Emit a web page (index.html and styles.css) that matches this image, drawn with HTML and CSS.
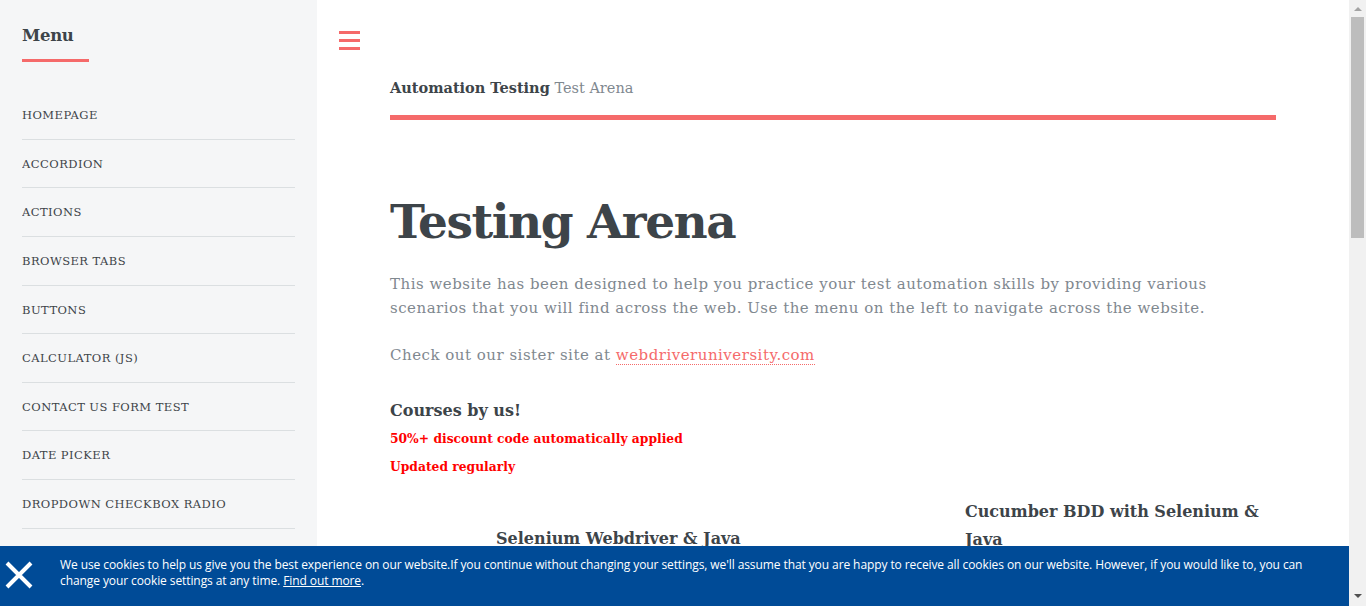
FILE: index.html
```html
<!DOCTYPE html>
<html lang="en">
<head>
<meta charset="utf-8">
<title>WebdriverUniversity.com (Test Arena)</title>
<link rel="stylesheet" href="styles.css">
</head>
<body>
<div class="wrapper">
  <aside class="sidebar">
    <header class="menu-head">
      <h2>Menu</h2>
    </header>
    <ul class="menu">
      <li><a href="#">Homepage</a></li>
      <li><a href="#">Accordion</a></li>
      <li><a href="#">Actions</a></li>
      <li><a href="#">Browser Tabs</a></li>
      <li><a href="#">Buttons</a></li>
      <li><a href="#">Calculator (JS)</a></li>
      <li><a href="#">Contact Us Form Test</a></li>
      <li><a href="#">Date Picker</a></li>
      <li><a href="#">Dropdown Checkbox Radio</a></li>
      <li><a href="#">File Upload</a></li>
      <li><a href="#">Hidden Elements</a></li>
      <li><a href="#">Iframe</a></li>
      <li><a href="#">Loader</a></li>
      <li><a href="#">Login Portal Test</a></li>
    </ul>
  </aside>
  <main class="main">
    <a class="toggle" href="#" aria-label="Toggle menu">
      <span></span><span></span><span></span>
    </a>
    <header class="topbar">
      <strong>Automation Testing</strong> <span class="sub">Test Arena</span>
    </header>
    <section class="intro">
      <h1>Testing Arena</h1>
      <p>This website has been designed to help you practice your test automation skills by providing various scenarios that you will find across the web. Use the menu on the left to navigate across the website.</p>
      <p>Check out our sister site at <a class="link" href="#">webdriveruniversity.com</a></p>
      <h3>Courses by us!</h3>
      <p class="promo">50%+ discount code automatically applied</p>
      <p class="promo">Updated regularly</p>
    </section>
    <section class="courses">
      <div class="course course-left">
        <h3>Selenium Webdriver &amp; Java</h3>
        <div class="course-body"></div>
      </div>
      <div class="course course-right">
        <h3>Cucumber BDD with Selenium &amp; Java</h3>
        <div class="course-body"></div>
      </div>
    </section>
  </main>
</div>
<div class="cookie">
  <span class="cookie-close" aria-label="Close">
    <svg width="28" height="28" viewBox="0 0 28 28"><path d="M2 2 L26 26 M26 2 L2 26" stroke="#fff" stroke-width="4" fill="none"/></svg>
  </span>
  <p class="cookie-text">We use cookies to help us give you the best experience on our website.If you continue without changing your settings, we'll assume that you are happy to receive all cookies on our website. However, if you would like to, you can change your cookie settings at any time. <a href="#">Find out more</a>.</p>
</div>
<div class="scrollbar" aria-hidden="true">
  <span class="sb-arrow sb-up"></span>
  <span class="sb-thumb"></span>
  <span class="sb-arrow sb-down"></span>
</div>
</body>
</html>
```

FILE: styles.css
```css
html, body {
  margin: 0;
  padding: 0;
}
body {
  font-family: "DejaVu Serif", serif;
  color: #7f888f;
  background: #fff;
}
.wrapper {
  display: flex;
  align-items: stretch;
  min-height: 1570px;
  margin-right: 17px;
}
.sidebar {
  width: 273px;
  flex: 0 0 273px;
  background: #f5f6f7;
  padding: 0 22px;
}
.menu-head {
  padding-top: 26px;
}
.menu-head h2 {
  margin: 0;
  display: inline-block;
  font-size: 16.5px;
  font-weight: bold;
  color: #3d4449;
  line-height: 20px;
  padding-bottom: 13px;
  border-bottom: 3px solid #f56a6a;
  padding-right: 15px;
  letter-spacing: -0.3px;
}
.menu {
  list-style: none;
  margin: 29px 0 0;
  padding: 0;
}
.menu li {
  border-top: 1px solid rgba(210, 215, 217, 0.75);
}
.menu li:first-child {
  border-top: 0;
}
.menu li a {
  display: block;
  height: 47.63px;
  line-height: 49px;
  overflow: hidden;
  font-size: 11.5px;
  letter-spacing: 0.45px;
  text-transform: uppercase;
  color: #3d4449;
  text-decoration: none;
}
.main {
  flex: 1;
  position: relative;
  padding: 0 73px;
}
.toggle {
  position: absolute;
  left: 22px;
  top: 31px;
  width: 21px;
  height: 19px;
  display: flex;
  flex-direction: column;
  justify-content: space-between;
}
.toggle span {
  display: block;
  height: 3px;
  background: #f56a6a;
}
.topbar {
  padding-top: 77px;
  padding-bottom: 16px;
  border-bottom: 5px solid #f56a6a;
  font-size: 14.5px;
  line-height: 22px;
}
.topbar strong {
  color: #3d4449;
}
.topbar .sub {
  color: #7f888f;
}
.intro h1 {
  margin: 70px 0 0;
  font-size: 47px;
  line-height: 64px;
  color: #3d4449;
  font-weight: bold;
  letter-spacing: -1.5px;
}
.intro p {
  margin: 18px 0 0;
  font-size: 15px;
  line-height: 24px;
  letter-spacing: 0.5px;
  color: #7f888f;
}
.intro p + p {
  margin-top: 23px;
}
.link {
  color: #f56a6a;
  text-decoration: none;
  border-bottom: 1px dotted #f56a6a;
}
.intro h3 {
  margin: 32px 0 0;
  font-size: 16px;
  line-height: 24px;
  color: #3d4449;
}
.intro p.promo {
  margin: 4px 0 0;
  font-size: 12.3px;
  line-height: 23.5px;
  font-weight: bold;
  letter-spacing: 0;
  color: #ff0000;
}
.courses {
  display: grid;
  grid-template-columns: 1fr 1fr;
  margin-top: 20px;
}
.course h3 {
  margin: 0;
  font-size: 16px;
  line-height: 28px;
  color: #3d4449;
}
.course-left h3 {
  padding: 27px 0 0 106px;
}
.course-right h3 {
  padding: 0 0 0 132px;
}
.course-body {
  height: 700px;
}
.cookie {
  position: fixed;
  left: 0;
  right: 17px;
  bottom: 0;
  height: 60px;
  background: #004b97;
  display: flex;
  align-items: flex-start;
}
.cookie-close {
  display: block;
  width: 28px;
  height: 28px;
  margin: 15px 0 0 5px;
}
.cookie-text {
  margin: 11px 30px 0 27px;
  font-family: "Open Sans", sans-serif;
  font-size: 12px;
  letter-spacing: -0.09px;
  line-height: 16px;
  color: #fff;
}
.cookie-text a {
  color: #fff;
  text-decoration: underline;
}
.scrollbar {
  position: fixed;
  top: 0;
  right: 0;
  bottom: 0;
  width: 17px;
  background: #f1f1f1;
  display: flex;
  flex-direction: column;
  align-items: center;
}
.sb-arrow {
  display: block;
  width: 0;
  height: 0;
  border-left: 4px solid transparent;
  border-right: 4px solid transparent;
}
.sb-up {
  margin-top: 7px;
  border-bottom: 4px solid #a3a3a3;
}
.sb-thumb {
  display: block;
  width: 13px;
  height: 221px;
  margin-top: 6px;
  background: #bdbdbd;
}
.sb-down {
  margin-top: auto;
  margin-bottom: 8px;
  border-top: 4px solid #505050;
}
```
